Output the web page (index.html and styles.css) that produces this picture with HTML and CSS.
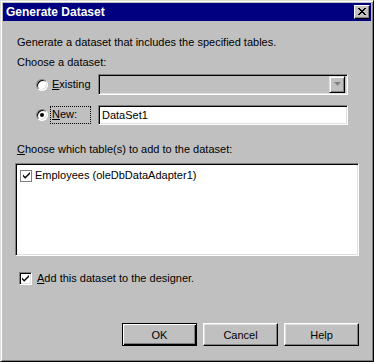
FILE: index.html
```html
<!DOCTYPE html>
<html lang="en">
<head>
    <meta charset="UTF-8">
    <title>Generate Dataset</title>
    <link rel="stylesheet" href="styles.css">
</head>
<body>
    <div class="window">
        <div class="title-bar">
            <span class="title">Generate Dataset</span>
            <span class="close-btn">
                <svg width="8" height="7" viewBox="0 0 8 7"><path d="M0 0h2v1h1v1h2v-1h1v-1h2v1h-1v1h-1v1h-1v1h1v1h1v1h1v1h-2v-1h-1v-1h-2v1h-1v1h-2v-1h1v-1h1v-1h1v-1h-1v-1h-1v-1h-1z" fill="#000"/></svg>
            </span>
        </div>

        <div class="dialog-body">
            <p class="desc">Generate a dataset that includes the specified tables.</p>
            <p class="label">Choose a dataset:</p>

            <div class="option-row first">
                <span class="radio"></span>
                <span class="option-label"><u>E</u>xisting</span>
                <div class="combo">
                    <span class="combo-btn">
                        <svg width="7" height="5" viewBox="0 0 7 5"><path d="M1 1h5l-2.5 3z" fill="#fff"/><path d="M0 0h7l-3.5 4z" fill="#808080"/></svg>
                    </span>
                </div>
            </div>

            <div class="option-row second">
                <span class="radio checked"></span>
                <span class="option-label focused"><u>N</u>ew:</span>
                <div class="textbox">DataSet1</div>
            </div>

            <p class="label tables-label"><u>C</u>hoose which table(s) to add to the dataset:</p>
            <div class="listbox">
                <div class="list-item">
                    <span class="flat-check">
                        <svg width="9" height="9" viewBox="0 0 9 9"><path d="M1 3.5l2.2 2.3 4.8-4.8v2l-4.8 4.8-2.2-2.3z" fill="#000"/></svg>
                    </span>
                    Employees (oleDbDataAdapter1)
                </div>
            </div>

            <div class="add-row">
                <span class="checkbox">
                    <svg width="9" height="9" viewBox="0 0 9 9"><path d="M1 3.5l2.2 2.3 4.8-4.8v2l-4.8 4.8-2.2-2.3z" fill="#000"/></svg>
                </span>
                <span><u>A</u>dd this dataset to the designer.</span>
            </div>

            <div class="buttons">
                <button class="default">OK</button>
                <button>Cancel</button>
                <button>Help</button>
            </div>
        </div>
    </div>
</body>
</html>
```

FILE: styles.css
```css
body {
    margin: 0;
    background: #c0c0c0;
    font-family: "Liberation Sans", Arial, sans-serif;
    font-size: 11px;
    color: #000;
}
.window {
    width: 374px;
    height: 362px;
    box-sizing: border-box;
    border: 1px solid;
    border-color: #dfdfdf #000 #000 #dfdfdf;
    box-shadow: inset 1px 1px #fff, inset -1px -1px #808080;
    padding: 2px;
    background: #c0c0c0;
    display: flex;
    flex-direction: column;
}
.title-bar {
    height: 18px;
    background: #000080;
    display: flex;
    align-items: center;
    justify-content: space-between;
    padding: 0 1px 0 3px;
}
.title {
    color: #fff;
    font-weight: bold;
    font-size: 12px;
}
.close-btn {
    width: 16px;
    height: 14px;
    box-sizing: border-box;
    background: #c0c0c0;
    border: 1px solid;
    border-color: #fff #000 #000 #fff;
    box-shadow: inset -1px -1px #808080;
    display: flex;
    align-items: center;
    justify-content: center;
    padding: 0 1px 1px 0;
}
.dialog-body {
    flex: 1;
    padding: 14px 12px 0 14px;
    display: flex;
    flex-direction: column;
}
p {
    margin: 0;
}
.desc,
.label {
    line-height: 14px;
}
.label {
    margin-top: 6px;
}
.option-row {
    display: flex;
    align-items: center;
    padding-left: 19px;
}
.option-row.first {
    margin-top: 5px;
}
.option-row.second {
    margin-top: 10px;
}
.radio {
    width: 12px;
    height: 12px;
    box-sizing: border-box;
    border-radius: 50%;
    background: #fff;
    border: 1px solid;
    border-color: #808080 #fff #fff #808080;
    box-shadow: inset 1px 1px #000, inset -1px -1px #dfdfdf;
    position: relative;
}
.radio.checked::after {
    content: "";
    position: absolute;
    left: 3px;
    top: 3px;
    width: 4px;
    height: 4px;
    border-radius: 50%;
    background: #000;
}
.option-label {
    margin-left: 3px;
    width: 39px;
    padding: 1px 1px 2px;
    box-sizing: border-box;
    line-height: 13px;
}
.option-label.focused {
    outline: 1px dotted #000;
    outline-offset: 0;
}
.combo,
.textbox {
    margin-left: 8px;
    width: 250px;
    box-sizing: border-box;
    border: 1px solid;
    border-color: #808080 #fff #fff #808080;
    box-shadow: inset 1px 1px #000, inset -1px -1px #dfdfdf;
}
.combo {
    height: 21px;
    background: #c0c0c0;
    display: flex;
    justify-content: flex-end;
    align-items: center;
    padding-right: 2px;
}
.combo-btn {
    width: 16px;
    height: 17px;
    box-sizing: border-box;
    border: 1px solid;
    border-color: #dfdfdf #000 #000 #dfdfdf;
    box-shadow: inset 1px 1px #fff, inset -1px -1px #808080;
    display: flex;
    align-items: center;
    justify-content: center;
}
.textbox {
    height: 20px;
    background: #fff;
    padding: 2px 3px;
    line-height: 14px;
}
.tables-label {
    margin-top: 17px;
}
.listbox {
    margin: 7px 0 0 -2px;
    height: 93px;
    background: #fff;
    box-sizing: border-box;
    border: 1px solid;
    border-color: #808080 #fff #fff #808080;
    box-shadow: inset 1px 1px #000, inset -1px -1px #dfdfdf;
    padding: 5px 4px;
}
.list-item {
    display: flex;
    align-items: center;
    gap: 3px;
    line-height: 13px;
}
.flat-check {
    width: 12px;
    height: 12px;
    box-sizing: border-box;
    border: 1px solid #808080;
    display: flex;
    align-items: center;
    justify-content: center;
}
.add-row {
    margin: 15px 0 0 2px;
    display: flex;
    align-items: center;
    gap: 5px;
    line-height: 14px;
}
.checkbox {
    width: 13px;
    height: 13px;
    box-sizing: border-box;
    background: #fff;
    border: 1px solid;
    border-color: #808080 #fff #fff #808080;
    box-shadow: inset 1px 1px #000, inset -1px -1px #dfdfdf;
    display: flex;
    align-items: center;
    justify-content: center;
}
.buttons {
    margin-top: 38px;
    display: flex;
    justify-content: flex-end;
    gap: 6px;
}
button {
    width: 75px;
    height: 23px;
    box-sizing: border-box;
    background: #c0c0c0;
    font-family: inherit;
    font-size: 11px;
    color: #000;
    border: 1px solid;
    border-color: #fff #000 #000 #fff;
    box-shadow: inset -1px -1px #808080, inset 1px 1px #dfdfdf;
    padding: 0;
}
button.default {
    border: 1px solid #000;
    box-shadow: inset 1px 1px #fff, inset -1px -1px #000, inset -2px -2px #808080;
}
```
